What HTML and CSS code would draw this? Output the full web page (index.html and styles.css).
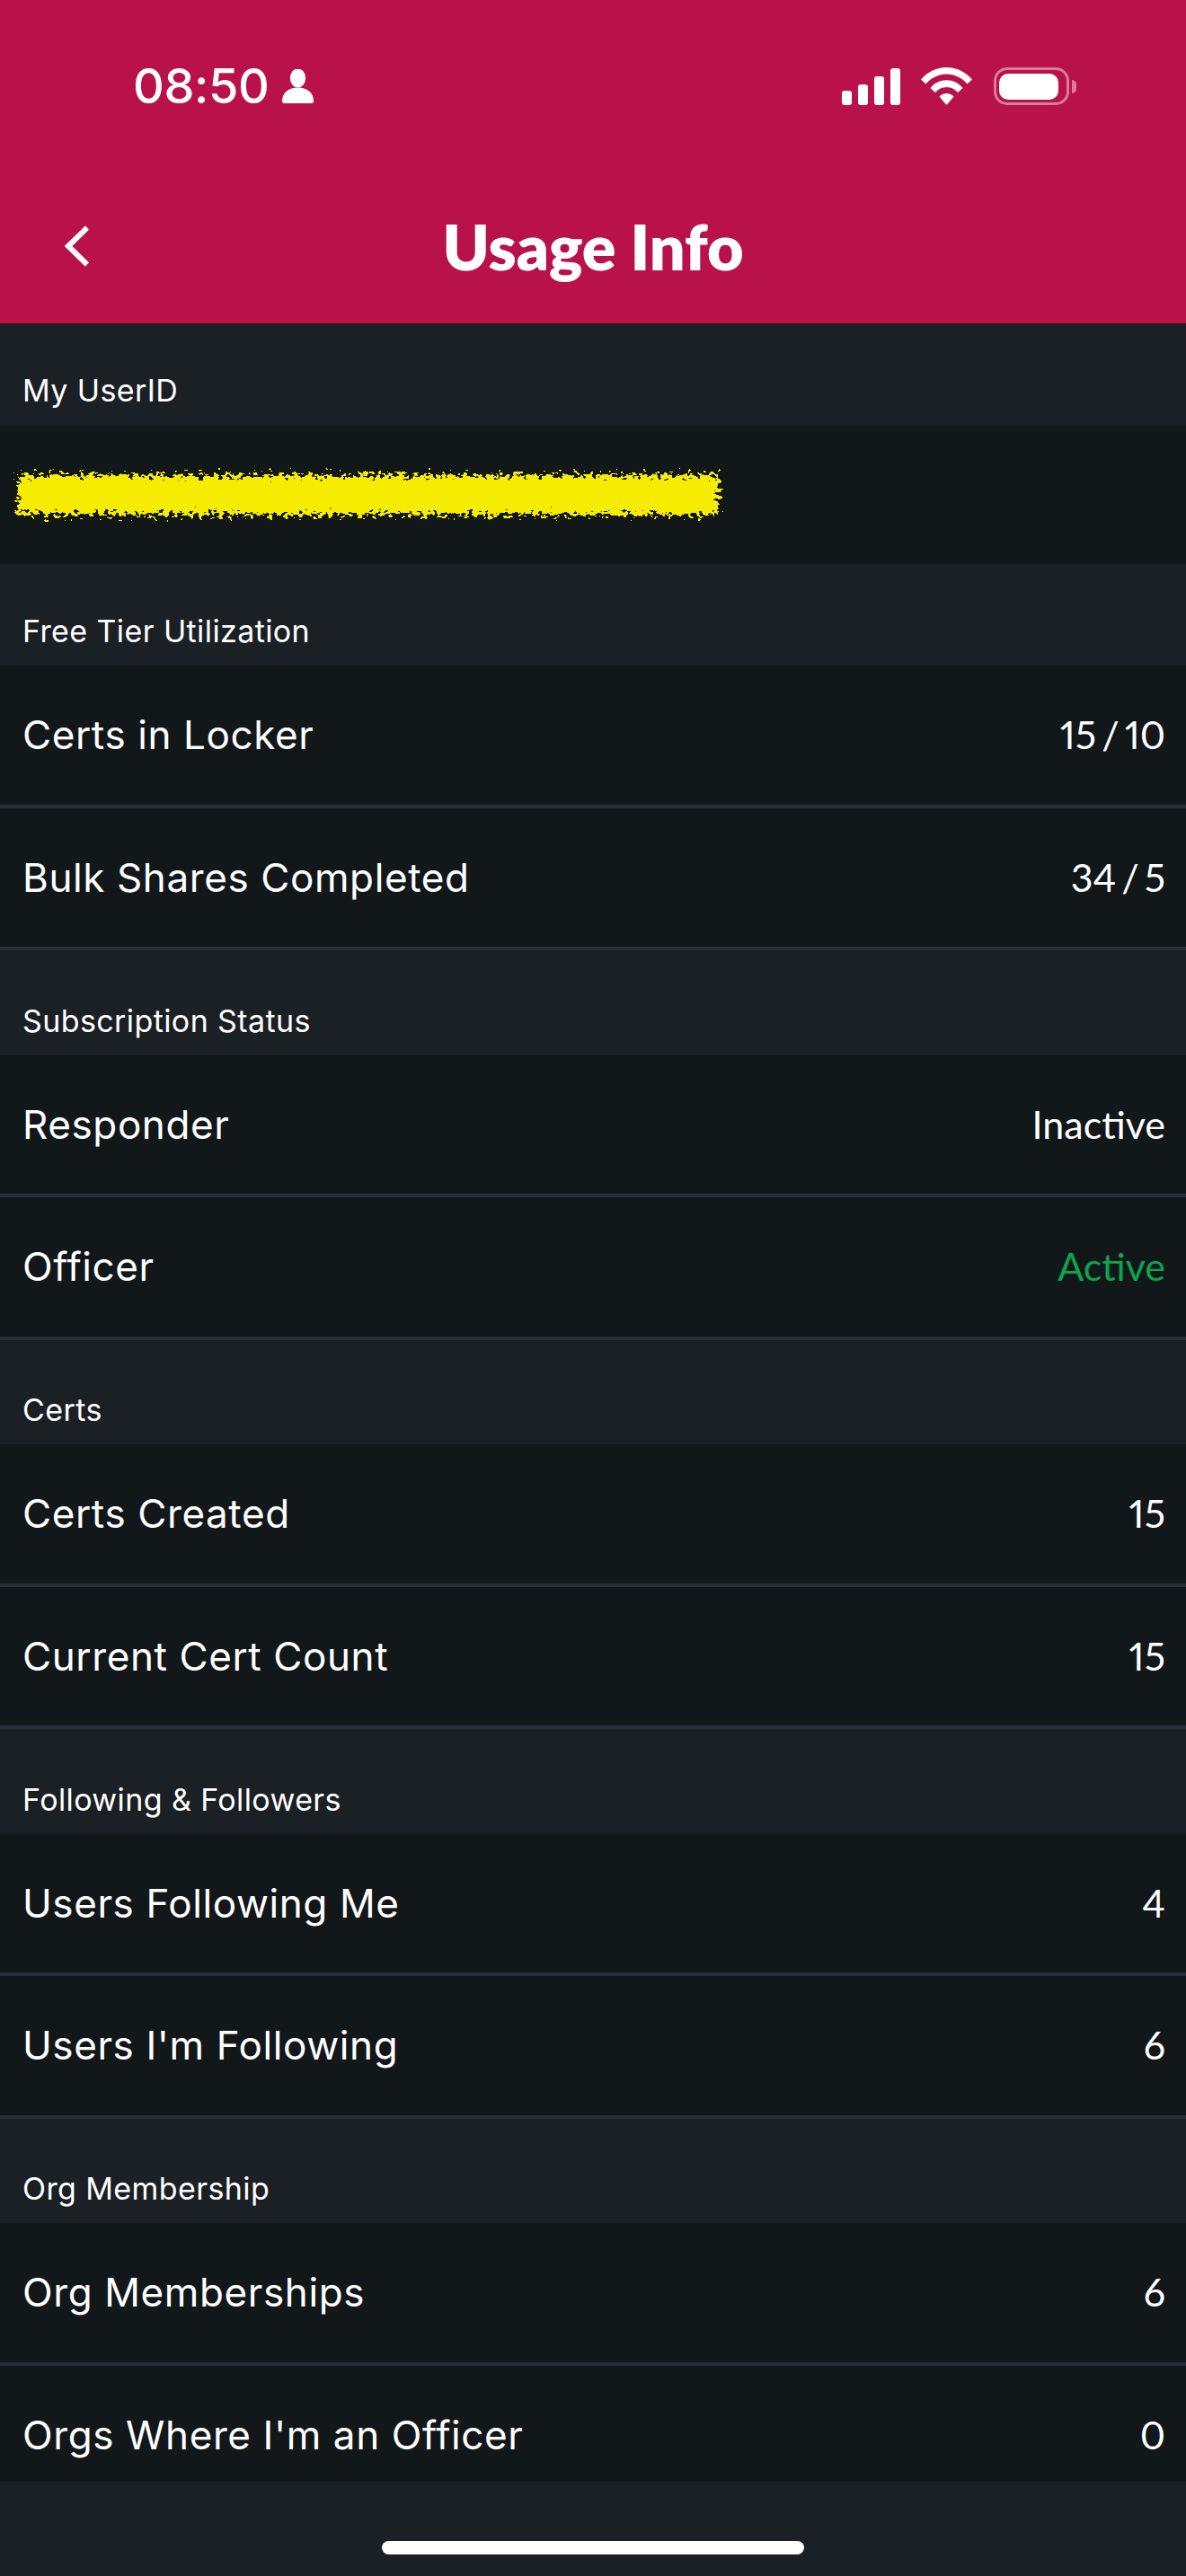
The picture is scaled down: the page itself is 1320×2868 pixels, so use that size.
FILE: index.html
```html
<!DOCTYPE html>
<html lang="en">
<head>
<meta charset="utf-8">
<title>Usage Info</title>
<link rel="stylesheet" href="styles.css">
</head>
<body>
<div class="screen">
  <header class="header">
    <div class="status">
      <div class="status-left">
        <span class="time">08:50</span>
        <svg class="person" viewBox="0 0 35 38"><ellipse cx="17.5" cy="10" rx="8.6" ry="10.5"/><path d="M0 35.5C0 26 7.5 20.5 17.5 20.5S35 26 35 35.5C35 37 34 38 33 38H2C1 38 0 37 0 35.5Z"/></svg>
      </div>
      <div class="status-right">
        <svg class="signal" viewBox="0 0 65 41"><rect x="0" y="25" width="11" height="16" rx="3"/><rect x="18" y="18" width="11" height="23" rx="3"/><rect x="36" y="9" width="11" height="32" rx="3"/><rect x="54" y="0" width="11" height="41" rx="3"/></svg>
        <svg class="wifi" viewBox="0 0 57 42"><path d="M0 13.500C7.500 4.800 17.500 0 28.500 0S49.500 4.800 57 13.500L51.500 18.500C45.500 11.500 37.500 7.500 28.500 7.500S11.500 11.500 5.500 18.500Z"/><path d="M10.500 23C15 17.500 21.500 14.300 28.500 14.300S42 17.500 46.500 23L41 28C37.800 24.200 33.500 22 28.500 22S19.200 24.200 16 28Z"/><path d="M20.500 32.500C22.500 30.300 25.300 29 28.500 29S34.500 30.300 36.500 32.500L28.500 42Z"/></svg>
        <div class="battery"><div class="battery-fill"></div></div>
        <div class="battery-cap"></div>
      </div>
    </div>
    <nav class="nav">
      <svg class="back" viewBox="0 0 28 46"><path d="M26 2.500L5 23L26 43.500"/></svg>
      <h1 class="title">Usage Info</h1>
    </nav>
  </header>
  <main class="list">
    <div class="label label-first">My UserID</div>
    <div class="id-row">
      <svg class="redaction" viewBox="0 0 800 60">
        <defs>
          <filter id="rough" x="-2%" y="-40%" width="104%" height="180%">
            <feTurbulence type="fractalNoise" baseFrequency="0.18 0.26" numOctaves="2" seed="7" result="noise"/>
            <feDisplacementMap in="SourceGraphic" in2="noise" scale="26" xChannelSelector="R" yChannelSelector="G"/>
          </filter>
        </defs>
        <rect class="redaction-fill" x="10" y="8" width="780" height="44" filter="url(#rough)"/>
      </svg>
    </div>
    <div class="label label-tight">Free Tier Utilization</div>
    <div class="row"><span class="name">Certs in Locker</span><span class="value">15 / 10</span></div>
    <div class="row"><span class="name">Bulk Shares Completed</span><span class="value">34 / 5</span></div>
    <div class="label">Subscription Status</div>
    <div class="row"><span class="name">Responder</span><span class="value">Inactive</span></div>
    <div class="row"><span class="name">Officer</span><span class="value value-active">Active</span></div>
    <div class="label">Certs</div>
    <div class="row"><span class="name">Certs Created</span><span class="value">15</span></div>
    <div class="row"><span class="name">Current Cert Count</span><span class="value">15</span></div>
    <div class="label">Following &amp; Followers</div>
    <div class="row"><span class="name">Users Following Me</span><span class="value">4</span></div>
    <div class="row"><span class="name">Users I'm Following</span><span class="value">6</span></div>
    <div class="label">Org Membership</div>
    <div class="row"><span class="name">Org Memberships</span><span class="value">6</span></div>
    <div class="row"><span class="name">Orgs Where I'm an Officer</span><span class="value">0</span></div>
  </main>
  <footer class="footer"><div class="home-bar"></div></footer>
</div>
</body>
</html>
```
FILE: styles.css
```css
* { box-sizing: border-box; margin: 0; padding: 0; }
html, body { width: 1320px; height: 2868px; overflow: hidden; }
body { background: #1b2025; color: #fff; font-family: "Inter", "Liberation Sans", sans-serif; }
.screen { width: 1320px; height: 2868px; display: flex; flex-direction: column; }

.header { height: 360px; flex: none; background: #b9124b; padding-top: 75px; }
.status { height: 42px; display: flex; justify-content: space-between; align-items: center; padding: 0 122px 0 148px; }
.status-left { display: flex; align-items: center; gap: 15px; }
.time { font-family: "Inter", sans-serif; font-weight: 500; font-size: 54px; line-height: 42px; letter-spacing: -.4px; }
.person { width: 35px; height: 38px; fill: #fff; }
.status-right { display: flex; align-items: center; }
.signal { width: 65px; height: 41px; fill: #fff; margin-right: 23px; }
.wifi { width: 57px; height: 42px; fill: #fff; margin-right: 24px; }
.battery { width: 84px; height: 42px; border: 3px solid rgba(255,255,255,.45); border-radius: 15px; padding: 4px 9px 3px 3px; display: flex; }
.battery-fill { flex: 1; background: #fff; border-radius: 10px; }
.battery-cap { width: 5px; height: 15px; margin-left: 3px; background: rgba(255,255,255,.45); border-radius: 0 8px 8px 0; }

.nav { position: relative; height: 243px; display: flex; align-items: center; justify-content: center; }
.back { position: absolute; left: 71px; top: 134px; width: 28px; height: 46px; fill: none; stroke: #fff; stroke-width: 6; }
.title { font-family: "Lato", sans-serif; font-weight: 800; font-size: 70px; line-height: 80px; margin-top: 71px; }

.list { flex: none; height: 2403px; overflow: hidden; }
.label { height: 116.5px; display: flex; align-items: flex-end; padding: 0 25px 16px; font-size: 34px; line-height: 44px; letter-spacing: .4px; }
.label-first { height: 114px; padding-bottom: 17px; }
.label-tight { height: 113px; padding-bottom: 16px; }
.id-row { height: 154px; background: #12171a; padding: 47px 0 0 10px; }
.redaction { display: block; width: 800px; height: 60px; }
.redaction-fill { fill: #f6ec00; }
.row { height: 158.5px; display: flex; align-items: center; justify-content: space-between; padding: 0 23px 0 25px; background: #12171a; border-bottom: 4px solid #292e38; }
.name { font-size: 44px; line-height: 60px; letter-spacing: .6px; font-weight: 400; }
.value { font-family: "Lato", sans-serif; font-size: 43px; line-height: 60px; font-variant-numeric: proportional-nums; word-spacing: -5px; }
.value-active { color: #0da44d; }

.footer { flex: 1; position: relative; }
.home-bar { position: absolute; left: 425px; top: 66px; width: 470px; height: 15px; background: #fff; border-radius: 8px; }
```
